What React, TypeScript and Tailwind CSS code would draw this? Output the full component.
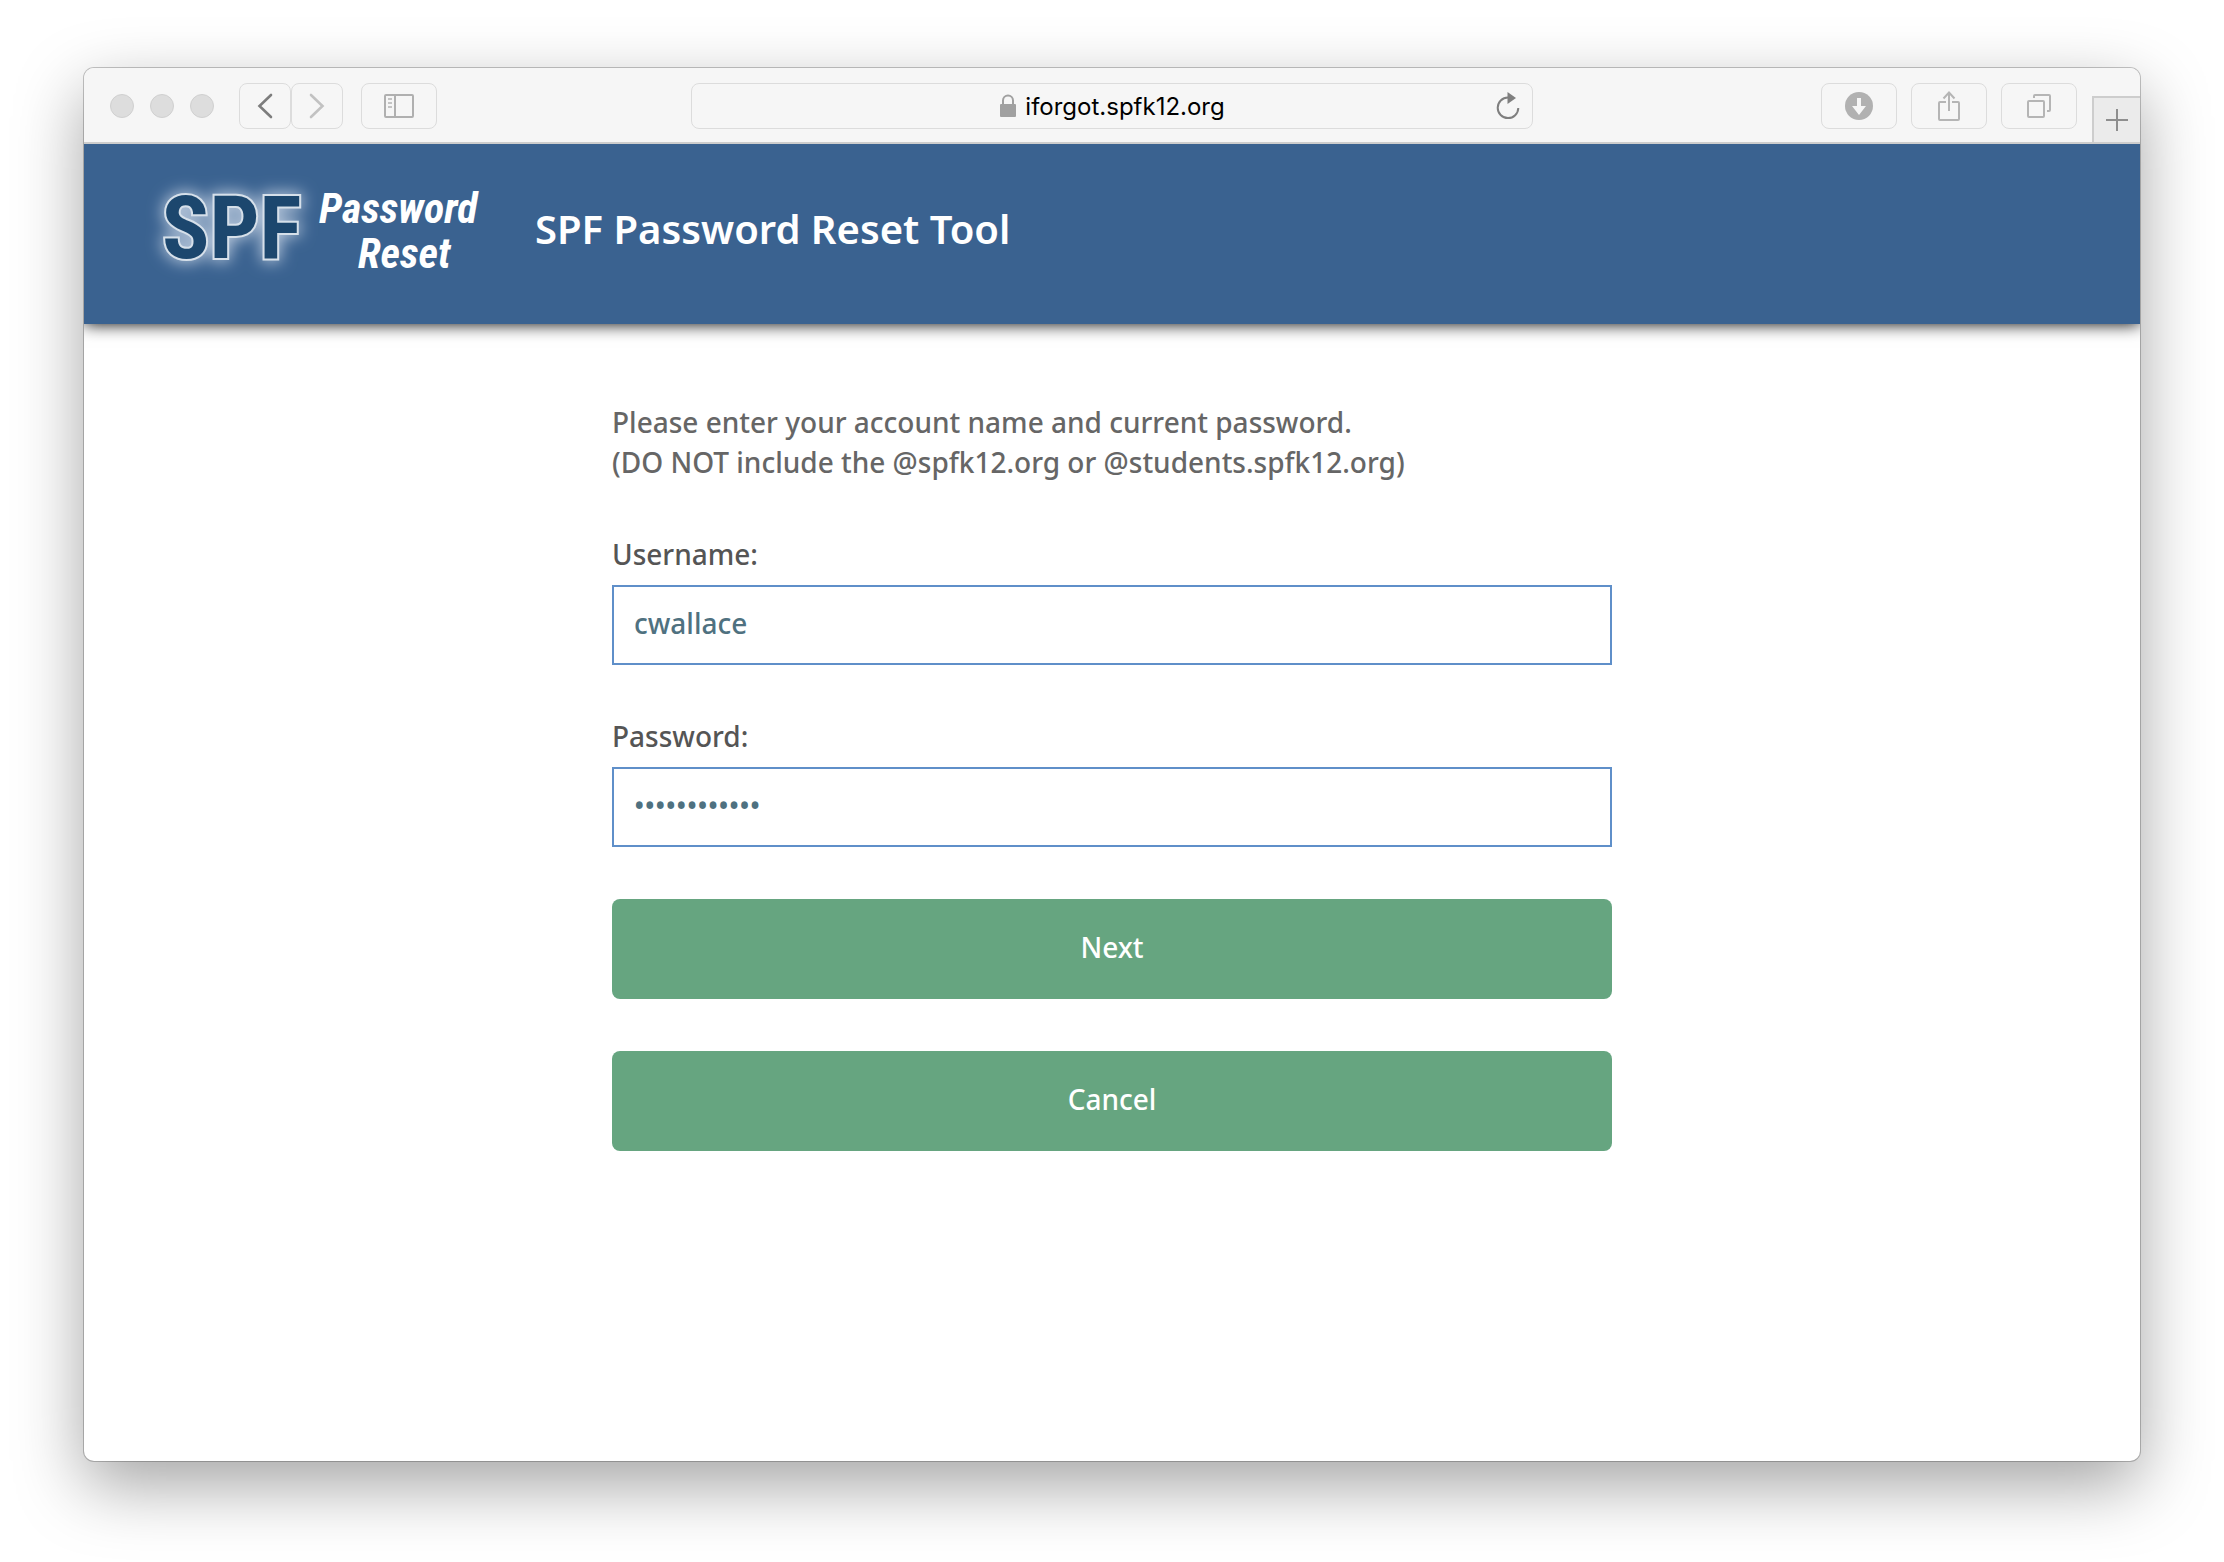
import type { ReactNode } from 'react'

const TOOL_BUTTON =
  'flex h-[46px] shrink-0 items-center justify-center rounded-lg border border-[#dcdcdc] bg-[#f6f6f6]'

function ToolButton({ label, className, children }: { label: string; className: string; children: ReactNode }) {
  return (
    <button type="button" aria-label={label} className={`${TOOL_BUTTON} ${className}`}>
      {children}
    </button>
  )
}

function Toolbar() {
  return (
    <div className="relative z-10 flex h-[76px] shrink-0 items-center border-b-2 border-[#cdcdcd] bg-[#f6f6f6] pt-[2px]">
      <div className="flex flex-1 items-center">
        <div className="ml-[26px] flex gap-4">
          {[0, 1, 2].map((i) => (
            <span key={i} className="size-6 rounded-full border border-[#d0d0d0] bg-[#dddddd]" />
          ))}
        </div>
        <div className="ml-[25px] flex">
          <ToolButton label="Back" className="w-[52px]">
            <svg width="16" height="26" viewBox="0 0 16 26" fill="none" stroke="#7d7d7d" strokeWidth="2.6" strokeLinecap="round">
              <path d="M14 2 2.5 13 14 24" />
            </svg>
          </ToolButton>
          <ToolButton label="Forward" className="w-[52px]">
            <svg width="16" height="26" viewBox="0 0 16 26" fill="none" stroke="#c2c2c2" strokeWidth="2.6" strokeLinecap="round">
              <path d="M2 2 13.5 13 2 24" />
            </svg>
          </ToolButton>
        </div>
        <ToolButton label="Show sidebar" className="ml-[18px] w-[76px]">
          <svg width="30" height="24" viewBox="0 0 30 24" fill="none" stroke="#b0b0b0" strokeWidth="2">
            <rect x="1" y="1" width="28" height="22" rx="1" />
            <path d="M11 1v22" />
            <path d="M4 5h4M4 9h4M4 13h4" stroke="#c4c4c4" />
          </svg>
        </ToolButton>
      </div>

      <div className="grid h-[46px] w-[41%] grid-cols-[1fr_auto_1fr] items-center rounded-lg border border-[#dcdcdc] px-3">
        <span />
        <div className="flex items-center gap-2">
          <svg width="18" height="24" viewBox="0 0 18 24">
            <path d="M4 11V6.500a5 5 0 0 1 10 0V11" fill="none" stroke="#a0a0a0" strokeWidth="2" />
            <rect x="1" y="10" width="16" height="13" rx="1" fill="#a0a0a0" />
          </svg>
          <span className="pt-[2px] font-['Inter',sans-serif] text-2xl text-black">iforgot.spfk12.org</span>
        </div>
        <button type="button" aria-label="Reload" className="justify-self-end">
          <svg width="24" height="32" viewBox="0 0 24 32">
            <path d="M12 7.500A10.300 10.300 0 1 0 22.300 18" fill="none" stroke="#7f7f7f" strokeWidth="2" />
            <path d="M11.500 2 20 8 11.500 14z" fill="#7f7f7f" />
          </svg>
        </button>
      </div>

      <div className="flex flex-1 items-center justify-end self-stretch">
        <div className="flex gap-[14px]">
          <ToolButton label="Downloads" className="w-[76px]">
            <svg width="28" height="28" viewBox="0 0 28 28">
              <circle cx="14" cy="14" r="14" fill="#b1b1b1" />
              <path d="M12 6h4v8h5l-7 9-7-9h5z" fill="#f6f6f6" />
            </svg>
          </ToolButton>
          <ToolButton label="Share" className="w-[76px]">
            <svg width="24" height="32" viewBox="0 0 24 32" fill="none" stroke="#b5b5b5" strokeWidth="2">
              <path d="M9 12H3a1 1 0 0 0-1 1v16a1 1 0 0 0 1 1h18a1 1 0 0 0 1-1V13a1 1 0 0 0-1-1h-6" />
              <path d="M12 21V2M6.500 8.500 12 2.500l5.500 6" />
            </svg>
          </ToolButton>
          <ToolButton label="Show all tabs" className="w-[76px]">
            <svg width="24" height="26" viewBox="0 0 24 26" fill="none" stroke="#b5b5b5" strokeWidth="2">
              <rect x="1" y="8" width="16" height="16" rx="1" />
              <path d="M7 5V3a1 1 0 0 1 1-1h14a1 1 0 0 1 1 1v14a1 1 0 0 1-1 1h-2" />
            </svg>
          </ToolButton>
        </div>
        <button
          type="button"
          aria-label="New tab"
          className="ml-[15px] flex h-[46px] w-12 items-center justify-center self-end border-t-2 border-l-2 border-[#cdcdcd] bg-[#ebebeb]"
        >
          <svg width="22" height="22" viewBox="0 0 22 22" stroke="#8e8e8e" strokeWidth="2">
            <path d="M11 0v22M0 11h22" />
          </svg>
        </button>
      </div>
    </div>
  )
}

function Logo() {
  return (
    <svg width="360" height="120" viewBox="0 0 360 120" role="img" aria-label="SPF Password Reset" className="shrink-0 overflow-visible">
      <defs>
        <filter id="glow" x="-30%" y="-40%" width="160%" height="180%">
          <feGaussianBlur stdDeviation="8" />
        </filter>
      </defs>
      <g fontFamily="'Roboto Condensed', Roboto, sans-serif" fontWeight="700">
        <text x="20" y="88" fontSize="88" fill="#b9c9dd" stroke="#b9c9dd" strokeWidth="6" filter="url(#glow)">
          SPF
        </text>
        <text x="20" y="88" fontSize="88" fill="#1c476e" stroke="#d6e0ea" strokeWidth="4" paintOrder="stroke">
          SPF
        </text>
        <g fontSize="42" fontStyle="italic" fill="#ffffff">
          <text x="177" y="53">Password</text>
          <text x="216" y="98">Reset</text>
        </g>
      </g>
    </svg>
  )
}

function Field({ id, label, type, value }: { id: string; label: string; type: string; value: string }) {
  return (
    <div>
      <label htmlFor={id} className="mb-[11px] block leading-10 text-[#555555]">
        {label}
      </label>
      <input
        id={id}
        type={type}
        defaultValue={value}
        className="block h-20 w-full border-2 border-[#5f8fc9] bg-white px-5 pb-1 text-[#4f7180] outline-none"
      />
    </div>
  )
}

const BUTTON = 'mt-[52px] block h-[100px] w-full rounded-lg bg-[#66a580] pb-1 text-white'

export default function App() {
  return (
    <div className="flex min-h-screen flex-col bg-white px-[84px] pt-[68px] pb-[101px]">
      <div className="flex flex-1 flex-col overflow-hidden rounded-[10px] bg-white shadow-[0_0_0_1px_rgba(0,0,0,0.22),0_24px_68px_rgba(0,0,0,0.36)]">
        <Toolbar />

        <header className="flex h-[180px] shrink-0 items-start bg-[#3a6290] pt-[26px] pl-[58px] shadow-[0_0_16px_#000000]">
          <Logo />
          <h1 className="ml-[33px] pt-[31px] font-['Noto_Sans',sans-serif] text-[40px] leading-[56px] font-semibold text-white">
            SPF Password Reset Tool
          </h1>
        </header>

        <main className="mx-auto w-full max-w-[1000px] pt-[78px] font-['Noto_Sans',sans-serif] text-[28px] font-medium">
          <p className="mb-[52px] leading-10 text-[#666666]">
            Please enter your account name and current password.
            <br />
            (DO NOT include the @spfk12.org or @students.spfk12.org)
          </p>
          <form onSubmit={(e) => e.preventDefault()}>
            <div className="flex flex-col gap-[51px]">
              <Field id="username" label="Username:" type="text" value="cwallace" />
              <Field id="password" label="Password:" type="password" value="abcdefghijkl" />
            </div>
            <button type="submit" className={BUTTON}>
              Next
            </button>
            <button type="button" className={BUTTON}>
              Cancel
            </button>
          </form>
        </main>
      </div>
    </div>
  )
}
